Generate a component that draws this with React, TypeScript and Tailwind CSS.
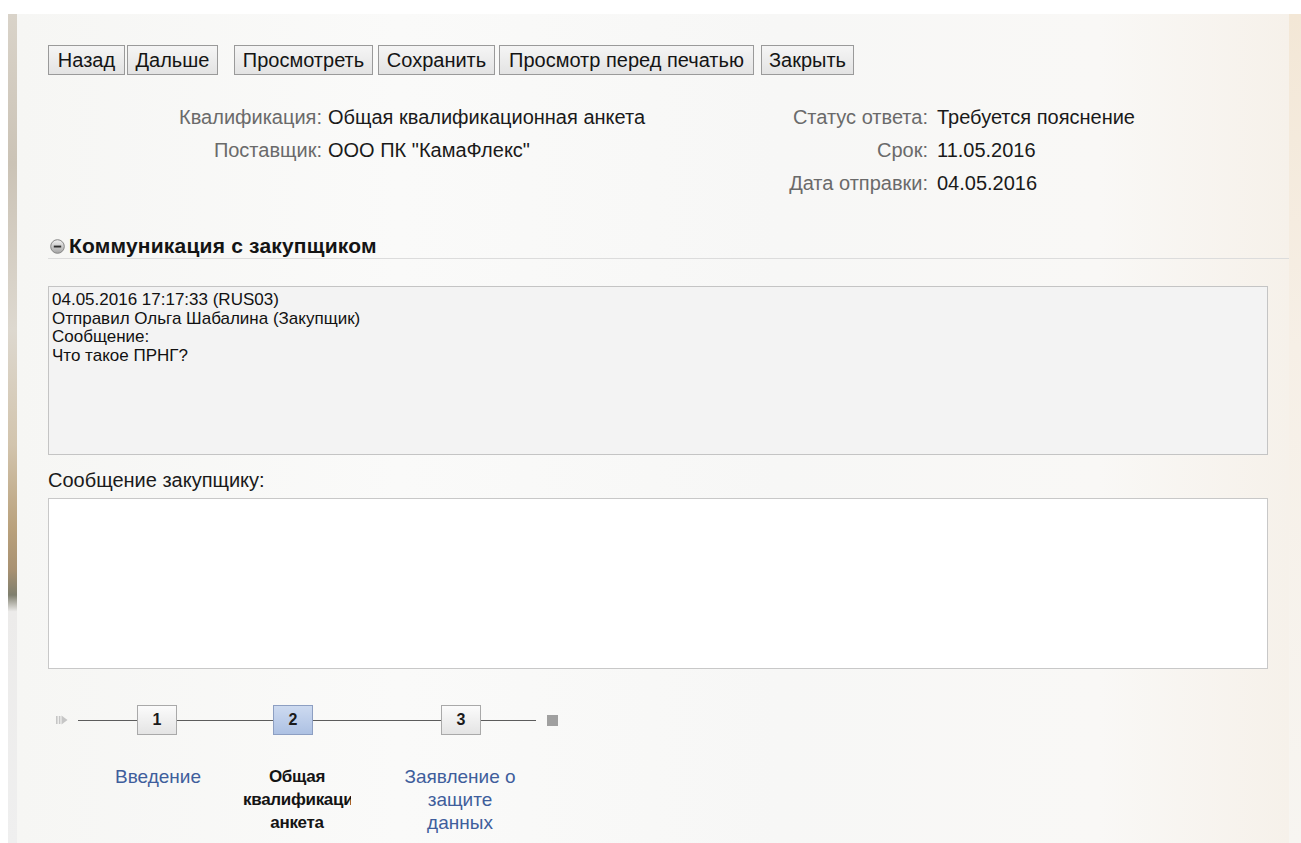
import React from "react";

const buttons = [
  { label: "Назад", w: "w-[77px]", ml: "ml-0" },
  { label: "Дальше", w: "w-[91px]", ml: "ml-[2px]" },
  { label: "Просмотреть", w: "w-[139px]", ml: "ml-[16px]" },
  { label: "Сохранить", w: "w-[117px]", ml: "ml-[5px]" },
  { label: "Просмотр перед печатью", w: "w-[255px]", ml: "ml-[4px]" },
  { label: "Закрыть", w: "w-[93px]", ml: "ml-[7px]" },
];

const messageLines = [
  "04.05.2016 17:17:33 (RUS03)",
  "Отправил Ольга Шабалина (Закупщик)",
  "Сообщение:",
  "Что такое ПРНГ?",
];

function CollapseIcon() {
  return (
    <svg width="15" height="15" viewBox="0 0 15 15" className="shrink-0">
      <defs>
        <linearGradient id="cg" x1="0" y1="0" x2="0" y2="1">
          <stop offset="0" stopColor="#f2f2f2" />
          <stop offset="1" stopColor="#a4a4a4" />
        </linearGradient>
      </defs>
      <circle cx="7.5" cy="7.5" r="6.8" fill="url(#cg)" stroke="#858585" />
      <rect x="3.8" y="6.6" width="7.4" height="1.9" fill="#2e2e2e" />
    </svg>
  );
}

// small "start" marker in front of the wizard line
function StartArrow() {
  return (
    <svg width="12" height="10" viewBox="0 0 12 10">
      <rect x="0" y="1" width="1.6" height="8" fill="#c6c6c6" />
      <rect x="2.8" y="1" width="1.6" height="8" fill="#c6c6c6" />
      <path d="M5.5 0.5 L11.5 5 L5.5 9.5 Z" fill="#c6c6c6" />
    </svg>
  );
}

function StepBox({ n, active }: { n: number; active?: boolean }) {
  return (
    <div
      className={
        active
          ? "w-[40px] h-[30px] shrink-0 flex items-center justify-center border border-[#8d9fc2] bg-[linear-gradient(180deg,#cddaf0,#adc1e3)] text-[16px] font-bold text-[#1a1a1a]"
          : "w-[40px] h-[30px] shrink-0 flex items-center justify-center border border-[#a9a9a9] bg-[linear-gradient(180deg,#fbfbfb,#e4e4e4)] text-[16px] font-bold text-[#1a1a1a]"
      }
    >
      {n}
    </div>
  );
}

export default function App() {
  return (
    <div className="min-h-screen w-full bg-white flex flex-col font-['Liberation_Sans',Arial,sans-serif] text-[#1a1a1a]">
      <div className="h-[14px] shrink-0 bg-white" />
      <div className="flex flex-1">
        <div className="w-[8px] shrink-0 bg-white" />
        {/* decorative frame edge */}
        <div className="w-[9px] shrink-0 bg-[linear-gradient(180deg,#d9d3c9_0%,#cbc3b6_18%,#ddd8cf_38%,#d2c4ad_52%,#b9a17c_62%,#a89172_67%,#7f7f6e_70%,#ecebea_72%,#efefef_100%)]" />

        <main className="flex-1 bg-[linear-gradient(90deg,#f6f6f4,#fafaf9_30%,#f7f7f6_60%,#f9f8f6_85%,#f6f1ea)] pl-[31px] pt-[31px] pb-[10px]">
          {/* toolbar */}
          <div className="flex h-[30px]">
            {buttons.map((b) => (
              <button
                key={b.label}
                className={`${b.w} ${b.ml} h-[30px] border border-[#9a9a9a] bg-[linear-gradient(180deg,#f5f5f5,#e3e3e3)] text-[20px] leading-none text-[#141414] flex items-center justify-center`}
              >
                {b.label}
              </button>
            ))}
          </div>

          {/* header fields */}
          <div className="mt-[25px] grid grid-cols-[280px_432px_177px_1fr] text-[20px]">
            <div className="h-[33px] flex items-center justify-end pr-[6px] text-[#6a6a6a]">Квалификация:</div>
            <div className="h-[33px] flex items-center">Общая квалификационная анкета</div>
            <div className="h-[33px] flex items-center justify-end pr-[9px] text-[#6a6a6a]">Статус ответа:</div>
            <div className="h-[33px] flex items-center">Требуется пояснение</div>

            <div className="h-[33px] flex items-center justify-end pr-[6px] text-[#6a6a6a]">Поставщик:</div>
            <div className="h-[33px] flex items-center">ООО ПК "КамаФлекс"</div>
            <div className="h-[33px] flex items-center justify-end pr-[9px] text-[#6a6a6a]">Срок:</div>
            <div className="h-[33px] flex items-center">11.05.2016</div>

            <div className="h-[33px]" />
            <div className="h-[33px]" />
            <div className="h-[33px] flex items-center justify-end pr-[9px] text-[#6a6a6a]">Дата отправки:</div>
            <div className="h-[33px] flex items-center">04.05.2016</div>
          </div>

          {/* communication section */}
          <div className="mt-[35px] h-[25px] flex items-center gap-[4px] border-b border-[#dcdcdc] pl-[2px]">
            <CollapseIcon />
            <span className="text-[21px] font-bold tracking-[0.2px] text-[#141414]">Коммуникация с закупщиком</span>
          </div>

          <div className="mt-[27px] w-[1220px] h-[169px] border border-[#c4c4c4] bg-[#f3f3f3] px-[3px] pt-[4px] text-[17px] leading-[18.7px] text-[#111]">
            {messageLines.map((l) => (
              <div key={l}>{l}</div>
            ))}
          </div>

          <div className="h-[43px] pt-[6px] flex items-center text-[20px] text-[#1a1a1a]">Сообщение закупщику:</div>
          <textarea className="block w-[1220px] h-[171px] border border-[#c8c8c8] bg-white resize-none outline-none" />

          {/* wizard steps */}
          <div className="mt-[36px] h-[30px] flex items-center">
            <div className="ml-[8px]">
              <StartArrow />
            </div>
            <div className="ml-[10px] w-[59px] h-px bg-[#5c5c5c]" />
            <StepBox n={1} />
            <div className="w-[96px] h-px bg-[#5c5c5c]" />
            <StepBox n={2} active />
            <div className="w-[128px] h-px bg-[#5c5c5c]" />
            <StepBox n={3} />
            <div className="w-[55px] h-px bg-[#5c5c5c]" />
            <div className="ml-[11px] w-[11px] h-[11px] bg-[#a0a0a0]" />
          </div>

          <div className="mt-[30px] flex text-[19px] leading-[23px]">
            <div className="ml-[55px] w-[110px] text-center text-[#3f5e9c]">Введение</div>
            <div className="ml-[30px] w-[108px] overflow-hidden text-center text-[17px] font-bold tracking-[-0.3px] text-[#141414]">
              <div>Общая</div>
              <div className="whitespace-nowrap text-left">квалификационная</div>
              <div>анкета</div>
            </div>
            <div className="ml-[44px] w-[130px] text-center text-[#3f5e9c]">
              Заявление о
              <br />
              защите
              <br />
              данных
            </div>
          </div>
        </main>
        <div className="w-[12px] shrink-0 bg-[linear-gradient(180deg,#f3e7d6,#f6efe6_40%,#f7f5f1_100%)]" />
      </div>
    </div>
  );
}
